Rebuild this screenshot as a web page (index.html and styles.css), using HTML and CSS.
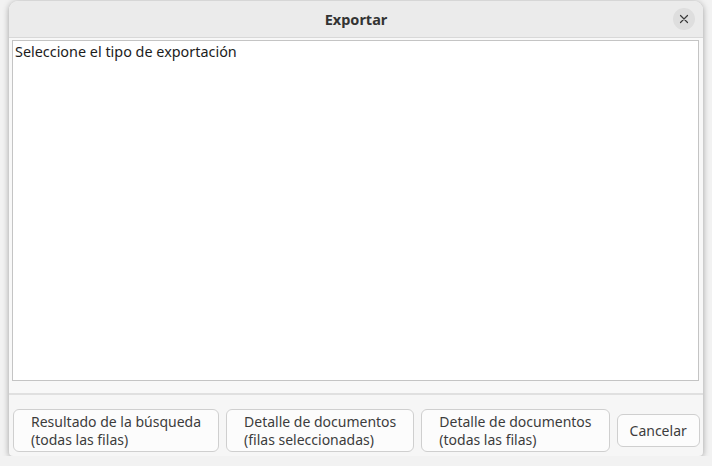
FILE: index.html
```html
<!DOCTYPE html>
<html lang="es">
<head>
    <meta charset="UTF-8">
    <title>Exportar</title>
    <link rel="stylesheet" href="styles.css">
</head>
<body>
    <div class="dialog">
        <div class="titlebar">
            <span class="title">Exportar</span>
            <button class="close" aria-label="Cerrar">
                <svg width="10" height="10" viewBox="0 0 10 10">
                    <path d="M1.5 1.5 L8.5 8.5 M8.5 1.5 L1.5 8.5" stroke="#3a3a3a" stroke-width="1.2" stroke-linecap="round"/>
                </svg>
            </button>
        </div>

        <div class="content">
            <div class="textview">Seleccione el tipo de exportación</div>
        </div>

        <div class="actions">
            <button class="btn">Resultado de la búsqueda<br>(todas las filas)</button>
            <button class="btn">Detalle de documentos<br>(filas seleccionadas)</button>
            <button class="btn">Detalle de documentos<br>(todas las filas)</button>
            <button class="btn small">Cancelar</button>
        </div>
    </div>
</body>
</html>
```

FILE: styles.css
```css
* {
    box-sizing: border-box;
}

body {
    margin: 0;
    background: #f2f2f2;
    font-family: 'Noto Sans', 'DejaVu Sans', sans-serif;
    color: #3c3c3c;
}

.dialog {
    margin: 1px 9px 0 9px;
    width: 694px;
    height: 455px;
    background: #f6f6f6;
    border-radius: 9px 9px 4px 4px;
    box-shadow: 0 1px 6px rgba(0, 0, 0, 0.35);
    display: flex;
    flex-direction: column;
    overflow: hidden;
}

.titlebar {
    height: 37px;
    flex: none;
    background: #ebebeb;
    border-bottom: 1px solid #d8d8d8;
    display: flex;
    align-items: center;
    justify-content: center;
    position: relative;
}

.title {
    font-weight: bold;
    font-size: 14.5px;
    color: #333;
}

.close {
    position: absolute;
    right: 8px;
    top: 7px;
    width: 22px;
    height: 22px;
    border: none;
    border-radius: 50%;
    background: #dedede;
    padding: 0;
    display: flex;
    align-items: center;
    justify-content: center;
}

.content {
    flex: none;
    padding: 2px 4px 0 3px;
    height: 357px;
    border-bottom: 2px solid #e0e0e0;
    background: #f8f8f8;
}

.textview {
    height: 341px;
    background: #fff;
    border: 1px solid #c4c4c4;
    padding: 1px 2px;
    font-size: 14.4px;
    color: #1c1c1c;
}

.actions {
    flex: 1;
    display: flex;
    align-items: center;
    gap: 7px;
    padding: 10px 4px 0 4px;
}

.btn {
    flex: none;
    white-space: nowrap;
    font-family: 'Noto Sans', 'DejaVu Sans', sans-serif;
    font-size: 14px;
    line-height: 18px;
    color: #3c3c3c;
    text-align: left;
    background: #fcfcfc;
    border: 1px solid #cfcfcf;
    border-radius: 6px;
    height: 43px;
    padding: 0 17px;
}

.btn.small {
    height: 33px;
    padding: 0 12px;
}
```
